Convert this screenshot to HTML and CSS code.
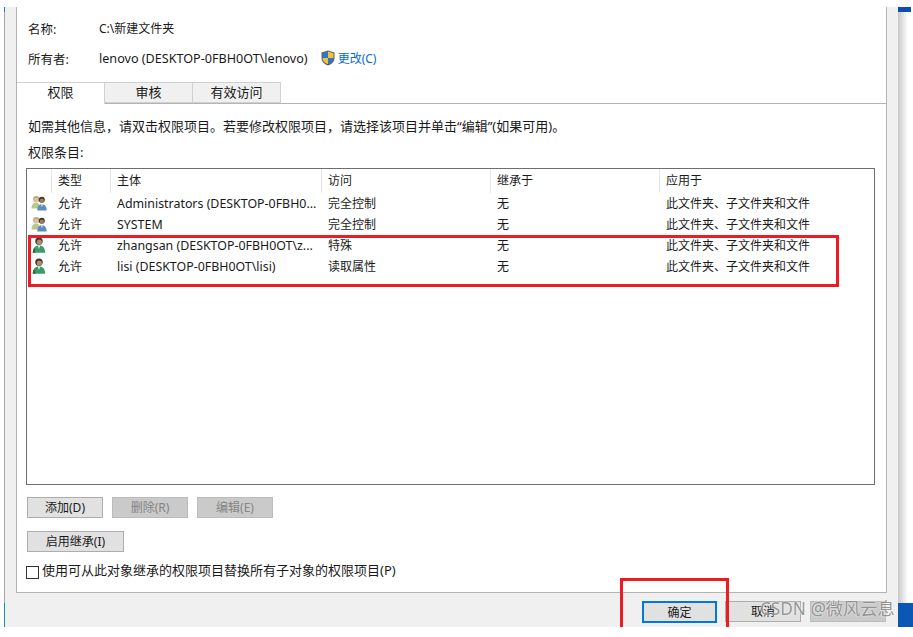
FILE: index.html
```html
<!DOCTYPE html>
<html lang="zh-CN">
<head>
<meta charset="utf-8">
<title>权限</title>
<link rel="stylesheet" href="styles.css">
</head>
<body>
<svg class="defs" width="0" height="0" aria-hidden="true">
  <defs>
    <symbol id="group" viewBox="0 0 16 16">
      <circle cx="5.300" cy="4.200" r="3.100" fill="#b8a67e"/>
      <circle cx="5.300" cy="5" r="2.200" fill="#e2c29a"/>
      <path d="M.5 13.500c0-4 1.600-5.800 4.500-5.800s3.800 1.500 3.800 5.800z" fill="#b7c98a"/>
      <circle cx="10.800" cy="4.800" r="3" fill="#3d342c"/>
      <circle cx="10.900" cy="5.700" r="2.100" fill="#a87a58"/>
      <path d="M6.300 15.500c0-4.300 1.600-6.300 4.500-6.300s4.800 2 4.800 6.300z" fill="#5b8cc0"/>
      <path d="M10 9.200h1.800l-.9 3z" fill="#e8eef4"/>
    </symbol>
    <symbol id="user" viewBox="0 0 16 16">
      <circle cx="8" cy="4.200" r="3.700" fill="#37332d"/>
      <circle cx="8.300" cy="5.200" r="2.600" fill="#b08a6c"/>
      <path d="M1.800 15.800c0-4.800 2.300-7.300 6.200-7.300s6.200 2.500 6.200 7.300z" fill="#3f9a6a"/>
      <path d="M6.800 8.500h2.400l-1.200 3.500z" fill="#e4efe8"/>
      <path d="M1.800 15.800c0-2 .5-3.700 1.600-5l1.100 5z" fill="#27694a"/>
    </symbol>
  </defs>
</svg>
<div class="dialog">
  <div class="accent"></div>
  <main class="panel">
    <div class="info-row name-row">
      <span class="info-label">名称:</span>
      <span>C:\新建文件夹</span>
    </div>
    <div class="info-row owner-row">
      <span class="info-label">所有者:</span>
      <span class="owner-name">lenovo (DESKTOP-0FBH0OT\lenovo)</span>
      <svg class="shield" viewBox="0 0 14 16" aria-hidden="true">
        <path d="M7 .5 13.500 2.500V8c0 3.500-2.500 6-6.500 7.500C3 14 .5 11.500.5 8V2.500z" fill="#5a6470"/>
        <path d="M7 1.500V8H1.500V3.200z" fill="#2a78c8"/>
        <path d="M7 1.500 12.500 3.200V8H7z" fill="#f5c033"/>
        <path d="M1.500 8H7v6.300C3.700 13 1.500 11 1.500 8z" fill="#f5c033"/>
        <path d="M7 8h5.500c0 3-2.200 5-5.500 6.300z" fill="#2a78c8"/>
      </svg>
      <a class="change-link">更改(C)</a>
    </div>
    <nav class="tabs">
      <span class="tab active">权限</span>
      <span class="tab audit">审核</span>
      <span class="tab effective">有效访问</span>
    </nav>
    <section class="content">
      <p class="hint">如需其他信息，请双击权限项目。若要修改权限项目，请选择该项目并单击“编辑”(如果可用)。</p>
      <p class="entries-label">权限条目:</p>
      <div class="list">
        <div class="row head">
          <span class="cell c-icon"></span>
          <span class="cell c-type">类型</span>
          <span class="cell c-who">主体</span>
          <span class="cell c-access">访问</span>
          <span class="cell c-inherit">继承于</span>
          <span class="cell c-apply">应用于</span>
        </div>
        <div class="row">
          <span class="cell c-icon"><svg class="ico"><use href="#group"/></svg></span>
          <span class="cell c-type">允许</span>
          <span class="cell c-who">Administrators (DESKTOP-0FBH0...</span>
          <span class="cell c-access">完全控制</span>
          <span class="cell c-inherit">无</span>
          <span class="cell c-apply">此文件夹、子文件夹和文件</span>
        </div>
        <div class="row">
          <span class="cell c-icon"><svg class="ico"><use href="#group"/></svg></span>
          <span class="cell c-type">允许</span>
          <span class="cell c-who">SYSTEM</span>
          <span class="cell c-access">完全控制</span>
          <span class="cell c-inherit">无</span>
          <span class="cell c-apply">此文件夹、子文件夹和文件</span>
        </div>
        <div class="row">
          <span class="cell c-icon"><svg class="ico"><use href="#user"/></svg></span>
          <span class="cell c-type">允许</span>
          <span class="cell c-who">zhangsan (DESKTOP-0FBH0OT\z...</span>
          <span class="cell c-access">特殊</span>
          <span class="cell c-inherit">无</span>
          <span class="cell c-apply">此文件夹、子文件夹和文件</span>
        </div>
        <div class="row">
          <span class="cell c-icon"><svg class="ico"><use href="#user"/></svg></span>
          <span class="cell c-type">允许</span>
          <span class="cell c-who">lisi (DESKTOP-0FBH0OT\lisi)</span>
          <span class="cell c-access">读取属性</span>
          <span class="cell c-inherit">无</span>
          <span class="cell c-apply">此文件夹、子文件夹和文件</span>
        </div>
      </div>
      <div class="actions">
        <button class="btn">添加(D)</button>
        <button class="btn off">删除(R)</button>
        <button class="btn off">编辑(E)</button>
      </div>
      <button class="btn inherit">启用继承(I)</button>
      <label class="check"><span class="box"></span>使用可从此对象继承的权限项目替换所有子对象的权限项目(P)</label>
    </section>
  </main>
  <footer class="footer">
    <button class="btn primary">确定</button>
    <button class="btn">取消</button>
    <button class="btn off apply"></button>
  </footer>
  <div class="shadow"></div>
  <div class="titlebar"></div>
  <div class="desktop"></div>
  <div class="mark mark-rows"></div>
  <div class="mark mark-ok"></div>
  <div class="watermark">CSDN @微风云息</div>
</div>
</body>
</html>
```
FILE: styles.css
```css
* { box-sizing: border-box; }
html, body { margin: 0; padding: 0; background: #fff; }
body {
  width: 913px;
  height: 637px;
  overflow: hidden;
  font-family: "Noto Sans", "Noto Sans CJK SC", sans-serif;
  font-size: 12px;
  color: #1a1a1a;
}
.defs { position: absolute; }
.dialog { position: relative; width: 913px; height: 627px; background: #fff; overflow: hidden; }
.dialog::before {
  content: "";
  position: absolute;
  left: 5px; top: 7px;
  width: 893px; height: 620px;
  background: #f0f0f0;
}
.accent {
  position: absolute;
  left: 4px; top: 7px;
  width: 1px; height: 620px;
  background: linear-gradient(180deg, #1f7fc0 0 5px, #a8a8a8 5px 596px, #1490b8 596px);
}
.panel {
  position: absolute;
  left: 16px; top: 7px;
  width: 871px; height: 586px;
  background: #fff;
  border: 1px solid #b4b4b4;
  border-top: 0;
}
.info-row { display: flex; align-items: center; height: 20px; padding-left: 11px; }
.name-row { margin-top: 11px; }
.owner-row { margin-top: 10px; }
.info-label { width: 71px; font-size: 12.500px; }
.owner-name { font-size: 12.600px; }
.shield { width: 14px; height: 16px; margin-left: 13px; margin-right: 3px; }
.change-link { color: #0a6ccc; }
.tabs { display: flex; height: 22px; margin-top: 14px; border-bottom: 1px solid #b4b4b4; align-items: flex-end; }
.tab {
  width: 88px; height: 21px;
  text-align: center; line-height: 18px;
  background: #f0f0f0;
  border: 1px solid #d0d0d0;
  border-left: 0;
  font-size: 13px;
}
.tab.active { background: #fff; border-bottom: 0; height: 22px; margin-bottom: -1px; }
.content { padding: 0 11px; }
.hint { margin: 0; padding-top: 12px; line-height: 20px; font-size: 13px; white-space: nowrap; }
.entries-label { margin: 6px 0 0; line-height: 20px; font-size: 13px; }
.list { margin: 6px 0 0 -2px; height: 317px; width: 849px; border: 1px solid #6e6e6e; background: #fff; }
.row { display: flex; height: 21px; align-items: center; padding-bottom: 2px; }
.row.head { height: 24px; padding-bottom: 0; }
.head .cell { height: 24px; line-height: 24px; border-right: 1px solid #e6e6e6; }
.cell { display: block; padding-left: 6px; white-space: nowrap; overflow: hidden; }
.c-icon { width: 25px; padding-left: 4px; }
.c-type { width: 59px; }
.c-who { width: 211px; font-size: 12.400px; padding-top: 2px; }
.head .c-who { font-size: 12px; padding-top: 0; }
.c-access { width: 169px; }
.c-inherit { width: 169px; }
.head .c-apply { flex: 1; border-right: 0; }
.c-apply { flex: 1; }
.ico { display: block; width: 16px; height: 16px; }
.actions { display: flex; gap: 9px; margin: 12px 0 0 -1px; }
.btn {
  width: 76px; height: 21px;
  padding: 0 0 2px;
  font: inherit;
  color: #1a1a1a;
  background: #e1e1e1;
  border: 1px solid #adadad;
}
.btn.off { background: #cacaca; border-color: #bcbcbc; color: #858585; }
.inherit { display: block; width: 97px; margin: 13px 0 0 -1px; }
.check { display: flex; align-items: center; gap: 3px; margin: 7px 0 0 -2px; height: 20px; font-size: 13px; white-space: nowrap; }
.box { width: 13px; height: 13px; margin-top: 7px; border: 1px solid #333; background: #fff; flex: none; }
.footer { position: absolute; left: 642px; top: 601px; display: flex; gap: 8px; }
.footer .btn { width: 76px; height: 21px; }
.footer .primary { border: 2px solid #0078d7; width: 75px; height: 22px; }
.footer .apply { margin-left: 1px; }
.shadow { position: absolute; left: 898px; top: 7px; width: 10px; height: 596px; background: linear-gradient(90deg, #c8c8c8, #fff); }
.titlebar { position: absolute; left: 898px; top: 7px; width: 13px; height: 5px; background: #0a4fb0; }
.desktop { position: absolute; left: 898px; top: 603px; width: 15px; height: 24px; background: #0a58b4; }
.mark { position: absolute; border: 3px solid #ed1c24; }
.mark-rows { left: 28px; top: 235px; width: 811px; height: 52px; }
.mark-ok { left: 620px; top: 578px; width: 109px; height: 60px; border-bottom: 0; }
.watermark {
  position: absolute;
  left: 760px; top: 598px;
  font-size: 17.200px;
  line-height: 22px;
  white-space: nowrap;
  color: rgba(125, 125, 125, .8);
  text-shadow: 0 0 2px #fff;
}
```
